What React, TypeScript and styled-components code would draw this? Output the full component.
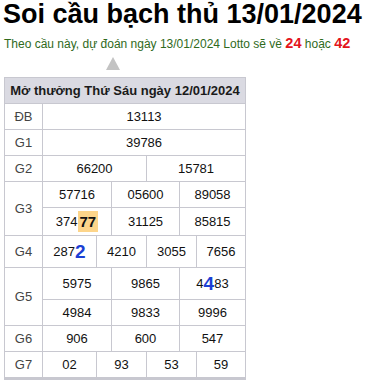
import React from 'react';
import styled, { createGlobalStyle } from 'styled-components';

const GlobalStyle = createGlobalStyle`
  body {
    margin: 0;
    background: #fff;
    font-family: "Liberation Sans", Arial, sans-serif;
  }
`;

const Page = styled.div`
  padding: 0 4px;
`;

const Title = styled.h1`
  margin: 0 0 0 -1px;
  font-size: 27px;
  line-height: 28px;
  font-weight: bold;
  color: #000;
  white-space: nowrap;
`;

const Lead = styled.p`
  margin: 6px 0 0;
  font-size: 12px;
  line-height: 18px;
  color: #2f6a1c;
  white-space: nowrap;
`;

const Hot = styled.b`
  color: #e3141b;
  font-size: 14.5px;
`;

const Arrow = styled.div`
  width: 0;
  height: 0;
  margin: 4px 0 0 102px;
  border-left: 7px solid transparent;
  border-right: 7px solid transparent;
  border-bottom: 13px solid #c3c3c3;
`;

const Board = styled.div`
  margin-top: 7px;
  display: grid;
  width: 242px;
  box-sizing: border-box;
  grid-template-columns: 38px 54px 15px 35px 33px 17px 49px;
  grid-template-rows: 26px 26px 26px 26px 26px 28px 32px 32px 26px 26px 26px;
  border-left: 1px solid #c8c8d0;
  border-top: 1px solid #c8c8d0;
  border-bottom: 2px solid #c8c8d0;
  font-size: 13px;
`;

const Cell = styled.div<{ $span?: number; $rows?: number }>`
  grid-column: span ${p => p.$span || 1};
  grid-row: span ${p => p.$rows || 1};
  box-sizing: border-box;
  display: flex;
  align-items: center;
  justify-content: center;
  border-right: 1px solid #c8c8d0;
  border-bottom: 1px solid #c8c8d0;
  color: #111;
  white-space: nowrap;
`;

const Heading = styled(Cell)`
  grid-column: 1 / -1;
  background: #dadae2;
  font-weight: bold;
  color: #1a1a1a;
`;

const Label = styled(Cell)`
  color: #444;
`;

const Mark = styled.b`
  background: #fdd58a;
  color: #111;
  font-size: 15px;
  padding: 2px;
  line-height: 17px;
`;

const Blue = styled.b`
  color: #1c3fd4;
  font-size: 19px;
  line-height: 20px;
`;

export default function App() {
  return (
    <Page>
      <GlobalStyle />
      <Title>Soi cầu bạch thủ 13/01/2024</Title>
      <Lead>
        Theo cầu này, dự đoán ngày 13/01/2024 Lotto sẽ về <Hot>24</Hot> hoặc <Hot>42</Hot>
      </Lead>
      <Arrow />
      <Board>
        <Heading>Mở thưởng Thứ Sáu ngày 12/01/2024</Heading>

        <Label>ĐB</Label>
        <Cell $span={6}>13113</Cell>

        <Label>G1</Label>
        <Cell $span={6}>39786</Cell>

        <Label>G2</Label>
        <Cell $span={3}>66200</Cell>
        <Cell $span={3}>15781</Cell>

        <Label $rows={2}>G3</Label>
        <Cell $span={2}>57716</Cell>
        <Cell $span={2}>05600</Cell>
        <Cell $span={2}>89058</Cell>
        <Cell $span={2}>374<Mark>77</Mark></Cell>
        <Cell $span={2}>31125</Cell>
        <Cell $span={2}>85815</Cell>

        <Label>G4</Label>
        <Cell>287<Blue>2</Blue></Cell>
        <Cell $span={2}>4210</Cell>
        <Cell $span={2}>3055</Cell>
        <Cell>7656</Cell>

        <Label $rows={2}>G5</Label>
        <Cell $span={2}>5975</Cell>
        <Cell $span={2}>9865</Cell>
        <Cell $span={2}>4<Blue>4</Blue>83</Cell>
        <Cell $span={2}>4984</Cell>
        <Cell $span={2}>9833</Cell>
        <Cell $span={2}>9996</Cell>

        <Label>G6</Label>
        <Cell $span={2}>906</Cell>
        <Cell $span={2}>600</Cell>
        <Cell $span={2}>547</Cell>

        <Label>G7</Label>
        <Cell>02</Cell>
        <Cell $span={2}>93</Cell>
        <Cell $span={2}>53</Cell>
        <Cell>59</Cell>
      </Board>
    </Page>
  );
}
